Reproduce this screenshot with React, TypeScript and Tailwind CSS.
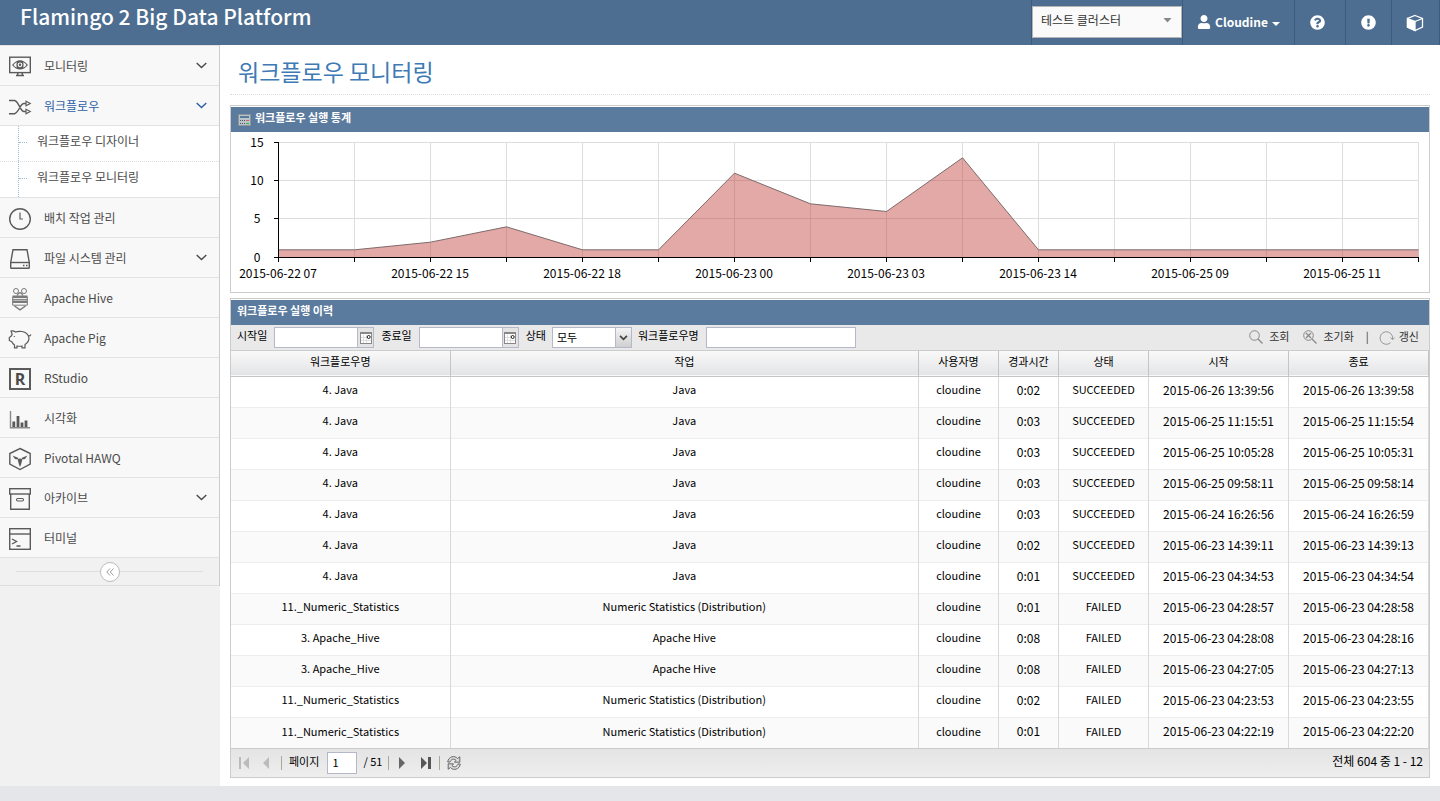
import type { ReactNode } from "react";
import { FaUser, FaQuestionCircle, FaExclamationCircle } from "react-icons/fa";

type MenuItem = {
  label: string;
  icon: ReactNode;
  expandable?: boolean;
  active?: boolean;
  children?: string[];
};

function Icon({ children }: { children: ReactNode }) {
  return (
    <svg width="24" height="24" viewBox="0 0 24 24" fill="none" stroke="#5a5a5a" strokeWidth="1.4" aria-hidden="true">
      {children}
    </svg>
  );
}

function Chevron() {
  return (
    <svg width="11" height="7" viewBox="0 0 11 7" fill="none" stroke="currentColor" strokeWidth="1.4" aria-hidden="true">
      <path d="M0.700 1L5.500 5.600L10.300 1" />
    </svg>
  );
}

const monitorIcon = (
  <Icon>
    <rect x="1.7" y="2.2" width="20.6" height="15.4" />
    <path d="M4 10Q12 0.500 20 10Q12 19 4 10Z" fill="#5a5a5a" stroke="none" />
    <path d="M5.500 10Q7 8 8.800 7.300Q8 10 8.800 12.600Q7 12 5.500 10ZM18.500 10Q17 8 15.200 7.300Q16 10 15.200 12.600Q17 12 18.500 10Z" fill="#f8f8f8" stroke="none" />
    <circle cx="12" cy="9.800" r="1.800" fill="#5a5a5a" stroke="#f8f8f8" strokeWidth="1.200" />
    <path d="M10 17.500L9.500 20M14 17.500L14.500 20M8 20.500H16" />
  </Icon>
);

const shuffleIcon = (
  <Icon>
    <path d="M1 5.500H6.500C11 6.500 12 16.500 16 16.500H18M1 18.700H6.500C11 17.500 12 8.500 16 8.500H18" />
    <path d="M18 6.200L22.300 8.500L18 10.800ZM18 14.200L22.300 16.500L18 18.800Z" strokeWidth="1.1" />
  </Icon>
);

const clockIcon = (
  <Icon>
    <circle cx="12" cy="12" r="10.300" />
    <path d="M12 5.500V12H15" strokeWidth="1.200" />
  </Icon>
);

const diskIcon = (
  <Icon>
    <path d="M5 2.700H19L21.300 15.500V20.500Q21.300 21.300 20.500 21.300H3.500Q2.700 21.300 2.700 20.500V15.500Z" />
    <path d="M2.700 15.500H21.300" />
    <path d="M15 18.500H16.500M18 18.500H19.500" strokeWidth="1.600" />
  </Icon>
);

const hiveIcon = (
  <Icon>
    <g stroke="#7a7a7a">
      <circle cx="8" cy="4" r="2.500" strokeWidth="1" />
      <circle cx="16" cy="4" r="2.500" strokeWidth="1" />
      <path d="M9 8.500Q12 3 15 8.500" strokeWidth="1.300" />
      <path d="M4.500 9.800H19.500M4.500 14.800H19.500" strokeWidth="2.500" />
      <path d="M4.700 9.800V18.200H19.300V9.800M4.500 12.400H19.500" strokeWidth="1" />
      <path d="M6.500 19L12 22.800L17.500 19" strokeWidth="1.500" />
    </g>
  </Icon>
);

const pigIcon = (
  <Icon>
    <path
      d="M7.500 5Q5.500 3.500 3 4L4.200 7.500Q3.300 9.500 1.300 10.500V13.500L4 15Q5 17 6.500 18V20.800H9V19Q11.500 19.500 14 19V20.800H17V17.500Q21 15 21 11Q20 5.500 14 4.500Q10 4 7.500 5Z"
      strokeWidth="1.200"
    />
    <path d="M20.500 8Q21.500 10 23 7.500" strokeWidth="1.100" />
    <path d="M6.300 9V10" strokeWidth="1.100" />
  </Icon>
);

const rIcon = (
  <span className="ml-px flex size-[22px] items-center justify-center border-2 border-[#5a5a5a] font-['Open_Sans',sans-serif] text-base leading-none font-bold text-[#4a4a4a]">
    R
  </span>
);

const barsIcon = (
  <Icon>
    <path d="M2.500 4V20.800H22" stroke="#8a8a8a" />
    <path d="M5.800 20V14.500M10 20V9M14 20V15.500M18 20V13.500" strokeWidth="2.800" />
  </Icon>
);

const hawkIcon = (
  <Icon>
    <path d="M12 1.500L22.200 6.500V17L12 22.500L1.800 17V6.500Z" />
    <path d="M4.500 8.500L10.500 11L9.500 12.500L7 12ZM19.500 8.500L13.500 11L14.500 12.500L17 12Z" fill="#5a5a5a" stroke="none" />
    <path d="M9.700 12.500Q12 10.500 14.300 12.500L13.200 17L12 20L10.800 17Z" fill="#5a5a5a" stroke="none" />
  </Icon>
);

const archiveIcon = (
  <Icon>
    <rect x="1.700" y="1.700" width="20.600" height="5.300" />
    <path d="M2.700 7V22.200H21.300V7" />
    <rect x="8.500" y="11.500" width="7" height="2.500" rx="1.200" strokeWidth="1.100" />
  </Icon>
);

const terminalIcon = (
  <Icon>
    <rect x="1.700" y="1.700" width="20.600" height="20.600" />
    <path d="M1.700 7H22.300" />
    <path d="M4 12L8.500 14.500L4 17M8.500 19H12.500" />
  </Icon>
);

const menu: MenuItem[] = [
  { label: "모니터링", icon: monitorIcon, expandable: true },
  {
    label: "워크플로우",
    icon: shuffleIcon,
    expandable: true,
    active: true,
    children: ["워크플로우 디자이너", "워크플로우 모니터링"],
  },
  { label: "배치 작업 관리", icon: clockIcon },
  { label: "파일 시스템 관리", icon: diskIcon, expandable: true },
  { label: "Apache Hive", icon: hiveIcon },
  { label: "Apache Pig", icon: pigIcon },
  { label: "RStudio", icon: rIcon },
  { label: "시각화", icon: barsIcon },
  { label: "Pivotal HAWQ", icon: hawkIcon },
  { label: "아카이브", icon: archiveIcon, expandable: true },
  { label: "터미널", icon: terminalIcon },
];

const JAVA = ["4. Java", "Java", "cloudine"];
const STATS = ["11._Numeric_Statistics", "Numeric Statistics (Distribution)", "cloudine"];
const HIVE = ["3. Apache_Hive", "Apache Hive", "cloudine"];

const rows: string[][] = [
  [...JAVA, "0:02", "SUCCEEDED", "2015-06-26 13:39:56", "2015-06-26 13:39:58"],
  [...JAVA, "0:03", "SUCCEEDED", "2015-06-25 11:15:51", "2015-06-25 11:15:54"],
  [...JAVA, "0:03", "SUCCEEDED", "2015-06-25 10:05:28", "2015-06-25 10:05:31"],
  [...JAVA, "0:03", "SUCCEEDED", "2015-06-25 09:58:11", "2015-06-25 09:58:14"],
  [...JAVA, "0:03", "SUCCEEDED", "2015-06-24 16:26:56", "2015-06-24 16:26:59"],
  [...JAVA, "0:02", "SUCCEEDED", "2015-06-23 14:39:11", "2015-06-23 14:39:13"],
  [...JAVA, "0:01", "SUCCEEDED", "2015-06-23 04:34:53", "2015-06-23 04:34:54"],
  [...STATS, "0:01", "FAILED", "2015-06-23 04:28:57", "2015-06-23 04:28:58"],
  [...HIVE, "0:08", "FAILED", "2015-06-23 04:28:08", "2015-06-23 04:28:16"],
  [...HIVE, "0:08", "FAILED", "2015-06-23 04:27:05", "2015-06-23 04:27:13"],
  [...STATS, "0:02", "FAILED", "2015-06-23 04:23:53", "2015-06-23 04:23:55"],
  [...STATS, "0:01", "FAILED", "2015-06-23 04:22:19", "2015-06-23 04:22:20"],
];

const columns = ["워크플로우명", "작업", "사용자명", "경과시간", "상태", "시작", "종료"];

function Header() {
  const cell = "flex items-center justify-center border-l border-[#3d5a7a] text-white";
  return (
    <header className="flex h-[45px] bg-[#4d6e90]">
      <div className="flex-1 pl-5 text-[21px] leading-8 font-medium text-white">Flamingo 2 Big Data Platform</div>
      <div className="border-l border-[#3d5a7a] pt-1.5">
        <div className="relative">
          <select
            aria-label="클러스터"
            className="block h-8 w-[150px] appearance-none rounded-none border border-[#b5b5b5] bg-[#fafafa] pb-1 pl-2 text-xs text-[#333]"
          >
            <option>테스트 클러스터</option>
          </select>
          <svg className="pointer-events-none absolute top-3 right-2.5" width="9" height="5" viewBox="0 0 9 5" aria-hidden="true">
            <path d="M0.500 0H8.500L4.500 4.500Z" fill="#888" />
          </svg>
        </div>
      </div>
      <button className={`${cell} w-28 gap-1 pb-0.5 text-xs font-bold`}>
        <FaUser size={14} />
        Cloudine
        <svg width="8" height="4" viewBox="0 0 8 4" className="mt-1" aria-hidden="true">
          <path d="M0 0H8L4 4Z" fill="#fff" />
        </svg>
      </button>
      <button aria-label="도움말" className={`${cell} w-[51px] pr-1.5`}>
        <FaQuestionCircle size={15} />
      </button>
      <button aria-label="알림" className={`${cell} w-[46px]`}>
        <FaExclamationCircle size={15} />
      </button>
      <button aria-label="패키지" className={`${cell} w-[49px] border-r pr-0.5`}>
        <svg width="18" height="18" viewBox="0 0 18 18" fill="none" stroke="#fff" strokeWidth="1.300" aria-hidden="true">
          <path d="M9 1.500L16.500 4.500V13L9 16.500L1.500 13V4.500Z" />
          <path d="M1.500 4.500L9 7.500V16.500L1.500 13Z" fill="#fff" />
          <path d="M9 7.500L16.500 4.500" />
        </svg>
      </button>
    </header>
  );
}

function Sidebar() {
  return (
    <nav className="w-[220px] shrink-0 bg-[#f1f1f1]">
      <div className="border-r border-[#ccc]">
        <ul className="border-t border-[#e3e3e3]">
          {menu.map((item) => (
            <li key={item.label} className="border-b border-[#e3e3e3]">
              <a
                href="#"
                className={`flex h-[39px] items-center bg-[#f8f8f8] pr-3 pl-2 text-xs ${
                  item.active ? "text-[#2b5fa5]" : "text-[#4a4a4a]"
                }`}
              >
                <span className="mt-0.5 flex w-9 items-center">{item.icon}</span>
                <span className="flex-1">{item.label}</span>
                {item.expandable && <Chevron />}
              </a>
              {item.children && (
                <ul className="border-t border-[#e3e3e3] bg-white text-xs text-[#4a4a4a]">
                  {item.children.map((child, i) => (
                    <li key={child} className={i > 0 ? "border-t border-dotted border-[#ddd]" : ""}>
                      <a href="#" className="ml-[18px] flex h-[35px] items-center border-l border-dotted border-[#9dbdd6] pb-1.5">
                        <span className="mt-1 mr-2.5 w-2 border-t border-dotted border-[#9dbdd6]" />
                        {child}
                      </a>
                    </li>
                  ))}
                </ul>
              )}
            </li>
          ))}
        </ul>
        <div className="flex h-7 items-center border-b border-[#ddd] px-4">
          <span className="h-px flex-1 bg-[#ddd]" />
          <button
            aria-label="메뉴 접기"
            className="flex size-5 items-center justify-center rounded-full border border-[#bbb] bg-white text-[#999]"
          >
            <svg width="8" height="8" viewBox="0 0 8 8" fill="none" stroke="currentColor" aria-hidden="true">
              <path d="M4 0.500L0.800 4L4 7.500M7.500 0.500L4.300 4L7.500 7.500" />
            </svg>
          </button>
          <span className="h-px flex-1 bg-[#ddd]" />
        </div>
      </div>
    </nav>
  );
}

const values = [1, 1, 2, 4, 1, 1, 11, 7, 6, 13, 1, 1, 1, 1, 1, 1];
const ticks = ["22 07", "22 15", "22 18", "23 00", "23 03", "23 14", "25 09", "25 11"];
const LEFT = 47.5;
const STEP = 76;
const BASE = 125.5;
const yOf = (v: number) => BASE - (v * 115) / 15;

function Chart() {
  const line = values.map((v, i) => `${LEFT + i * STEP},${yOf(v)}`).join(" ");
  const right = LEFT + STEP * (values.length - 1);
  return (
    <svg viewBox="0 0 1198 160" className="block w-full" fontSize="12" fill="#000" role="img" aria-label="워크플로우 실행 통계">
      <g stroke="#ddd">
        {[5, 10, 15].map((v) => (
          <path key={v} d={`M${LEFT} ${Math.round(yOf(v)) - 0.5}H${right}`} />
        ))}
        {values.slice(1).map((_, i) => (
          <path key={i} d={`M${LEFT + (i + 1) * STEP} 10V125`} />
        ))}
      </g>
      <polygon points={`${LEFT},${BASE} ${line} ${right},${BASE}`} fill="#c0403c" fillOpacity="0.45" />
      <polyline points={line} fill="none" stroke="#7d6b6b" />
      <g stroke="#000">
        <path d={`M${LEFT} 10V125.500H${right}`} fill="none" />
        {[0, 5, 10, 15].map((v) => (
          <path key={v} d={`M43 ${v === 0 ? BASE : Math.round(yOf(v)) - 0.5}H${LEFT}`} />
        ))}
        {values.map((_, i) => (
          <path key={i} d={`M${LEFT + i * STEP} 125V130`} />
        ))}
      </g>
      {[0, 5, 10, 15].map((v) => (
        <text key={v} x="26" y={yOf(v) + 4} textAnchor="middle">
          {v}
        </text>
      ))}
      {ticks.map((t, i) => (
        <text key={t} x={47 + i * 152} y="146" textAnchor="middle">
          2015-06-{t}
        </text>
      ))}
    </svg>
  );
}

function PanelTitle({ children }: { children: ReactNode }) {
  return (
    <h2 className="mt-px flex h-[25px] items-center gap-1 bg-[#5b7b9e] px-1.5 pb-1 text-[11px] font-bold text-white">{children}</h2>
  );
}

function DateField({ id, label }: { id: string; label: string }) {
  return (
    <>
      <label htmlFor={id} className="pb-1">
        {label}
      </label>
      <span className="mx-[7px] flex h-[21px] border border-[#b5b8c8] bg-white">
        <input id={id} className="w-[82px] px-1 outline-none" />
        <button aria-label={`${label} 선택`} className="flex w-4 items-center justify-center border-l border-[#b5b8c8] bg-[#e4e4e4]">
          <svg width="12" height="12" viewBox="0 0 12 12" fill="none" aria-hidden="true">
            <rect x="0.500" y="0.500" width="11" height="11" fill="#fff" stroke="#888" />
            <path d="M0 1.500H12" stroke="#888" />
            <path d="M3.500 3V11M6.500 3V11M1 5.500H8M1 8.500H11" stroke="#ddd" />
            <circle cx="8.700" cy="5" r="1.500" stroke="#222" />
          </svg>
        </button>
      </span>
    </>
  );
}

function Toolbar() {
  return (
    <div className="flex h-[26px] items-center border-b border-[#ccc] bg-[#e9e9e9] pr-2.5 pl-1.5 text-[11px] text-black">
      <DateField id="start" label="시작일" />
      <DateField id="end" label="종료일" />
      <label htmlFor="status" className="pb-1">
        상태
      </label>
      <span className="relative mx-1.5">
        <select id="status" className="block h-[21px] w-20 appearance-none rounded-none border border-[#b5b8c8] bg-white pl-1">
          <option>모두</option>
        </select>
        <span className="pointer-events-none absolute top-px right-px flex h-[19px] w-4 items-center justify-center border-l border-[#b5b8c8] bg-linear-to-b from-[#f4f4f4] to-[#cfcfcf]">
          <svg width="9" height="6" viewBox="0 0 10 7" fill="none" stroke="#444" strokeWidth="2" aria-hidden="true">
            <path d="M1 1L5 5L9 1" />
          </svg>
        </span>
      </span>
      <label htmlFor="name" className="pb-1">
        워크플로우명
      </label>
      <input id="name" className="ml-[7px] h-[21px] w-[150px] border border-[#b5b8c8] bg-white px-1 outline-none" />
      <div className="ml-auto flex items-center pb-0.5 text-[#333]">
        <button className="flex items-center gap-1.5">
          <svg width="14" height="14" viewBox="0 0 14 14" fill="none" stroke="#888" aria-hidden="true">
            <circle cx="5.500" cy="5.500" r="4.800" />
            <path d="M9 9L13.500 13.500" strokeWidth="1.300" />
          </svg>
          조회
        </button>
        <button className="ml-3.5 flex items-center gap-1.5">
          <svg width="14" height="14" viewBox="0 0 14 14" fill="none" stroke="#888" aria-hidden="true">
            <circle cx="5.500" cy="5.500" r="4.800" />
            <path d="M9 9L13.500 13.500M3 3L8 8M8 3L3 8" strokeWidth="1.300" />
          </svg>
          초기화
        </button>
        <span className="mr-2.5 ml-3">|</span>
        <button className="flex items-center gap-1">
          <svg width="16" height="16" viewBox="0 0 16 16" className="mt-0.5" fill="none" stroke="#999" aria-hidden="true">
            <path d="M11.500 12.800A6.300 6.300 0 1 1 13.600 9M11.500 7.500L13.600 9.800L15.500 7.500" />
          </svg>
          갱신
        </button>
      </div>
    </div>
  );
}

const isTime = (column: number) => column === 3 || column > 4;

function Grid() {
  return (
    <table className="w-full table-fixed border-collapse text-center text-[11px] text-black">
      <colgroup>
        <col className="w-[219px]" />
        <col />
        <col className="w-20" />
        <col className="w-[60px]" />
        <col className="w-[90px]" />
        <col className="w-[140px]" />
        <col className="w-[140px]" />
      </colgroup>
      <thead>
        <tr className="h-[25px] border-b border-[#c5c5c5] bg-linear-to-b from-[#f9f9f9] to-[#e3e4e6]">
          {columns.map((c) => (
            <th key={c} className="border-r border-[#c5c5c5] p-0 pb-1 font-normal">
              {c}
            </th>
          ))}
        </tr>
      </thead>
      <tbody>
        {rows.map((row, r) => (
          <tr key={r} className="h-[31px] border-b border-[#ededed] last:border-0 even:bg-[#fafafa]">
            {row.map((value, c) => (
              <td key={c} className={`border-r border-[#d9d9d9] p-0 pb-1 ${isTime(c) ? "text-xs" : ""}`}>
                {value}
              </td>
            ))}
          </tr>
        ))}
      </tbody>
    </table>
  );
}

function Pager() {
  return (
    <div className="flex h-[29px] items-center border-t border-[#ccc] bg-linear-to-b from-[#e4e4e4] to-[#eee] px-1.5 text-[11px] text-black">
      <button aria-label="첫 페이지" className="mr-3.5 ml-0.5">
        <svg width="10" height="12" viewBox="0 0 10 12" fill="#bbb" aria-hidden="true">
          <path d="M0 0H2V12H0ZM10 0V12L4 6Z" />
        </svg>
      </button>
      <button aria-label="이전 페이지" className="mr-3">
        <svg width="6" height="12" viewBox="0 0 6 12" fill="#bbb" aria-hidden="true">
          <path d="M6 0V12L0 6Z" />
        </svg>
      </button>
      <span className="h-3.5 w-px bg-[#aca899]" />
      <label htmlFor="page" className="mr-2 ml-[7px] pb-1">
        페이지
      </label>
      <input id="page" defaultValue="1" className="h-[22px] w-[30px] border border-[#b5b8c8] bg-white px-1 pb-0.5 outline-none" />
      <span className="mx-1.5 pb-1">/ 51</span>
      <span className="h-3.5 w-px bg-[#aca899]" />
      <button aria-label="다음 페이지" className="ml-2.5">
        <svg width="6" height="12" viewBox="0 0 6 12" fill="#666" aria-hidden="true">
          <path d="M0 0V12L6 6Z" />
        </svg>
      </button>
      <button aria-label="마지막 페이지" className="mr-2 ml-4">
        <svg width="10" height="12" viewBox="0 0 10 12" fill="#555" aria-hidden="true">
          <path d="M7 0H10V12H7ZM0 0V12L6 6Z" />
        </svg>
      </button>
      <span className="h-3.5 w-px bg-[#aca899]" />
      <button aria-label="새로 고침" className="ml-[7px]">
        <svg width="14" height="14" viewBox="0 0 14 14" fill="#ddd" stroke="#666" strokeWidth="1" aria-hidden="true">
          <path d="M0.700 6C1.500 0.500 7.500 -1 10.500 2.500L12.800 0.800V6.200H7.500L9 4.300C6.500 2 4 3.500 3 6Z" />
          <path d="M13.300 8C12.500 13.500 6.500 15 3.500 11.500L1.200 13.200V7.800H6.500L5 9.700C7.500 12 10 10.500 11 8Z" />
        </svg>
      </button>
      <span className="ml-auto pb-1 text-xs">전체 604 중 1 - 12</span>
    </div>
  );
}

export default function App() {
  return (
    <div className="flex min-h-screen flex-col bg-white font-['Noto_Sans_CJK_KR',sans-serif]">
      <Header />
      <div className="flex flex-1">
        <Sidebar />
        <main className="min-w-0 flex-1 px-2.5">
          <h1 className="mb-2.5 border-b border-dotted border-[#ddd] pt-2 pb-[5px] pl-2 text-[23px] leading-9 text-[#3e7ab5]">
            워크플로우 모니터링
          </h1>
          <section className="mb-[5px] border border-[#ccc]">
            <PanelTitle>
              <svg width="13" height="12" viewBox="0 0 13 12" className="mt-1 ml-px" aria-hidden="true">
                <rect x="0.500" y="0.500" width="12" height="11" fill="#b9c4ca" stroke="#8c959b" />
                <path d="M2 3H11" stroke="#577c9c" strokeWidth="2" />
                <path d="M2 6.500H7M2 9.500H7" stroke="#555" strokeDasharray="1 1" />
                <path d="M8 6.500H11" stroke="#c66" />
                <path d="M8 9.500H11" stroke="#3b3" />
              </svg>
              워크플로우 실행 통계
            </PanelTitle>
            <Chart />
          </section>
          <section className="border border-[#ccc]">
            <PanelTitle>워크플로우 실행 이력</PanelTitle>
            <Toolbar />
            <Grid />
            <Pager />
          </section>
        </main>
      </div>
      <footer className="h-[15px] bg-[#e4e6ea]" />
    </div>
  );
}
